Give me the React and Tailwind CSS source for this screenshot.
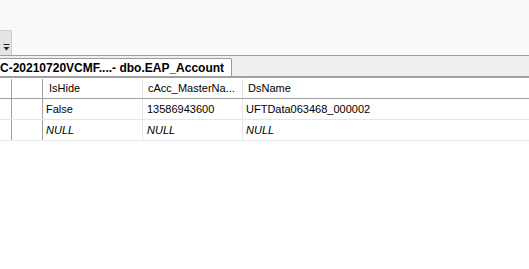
export default function App() {
  const font = { fontFamily: '"Liberation Sans", Arial, sans-serif' };
  return (
    <div className="w-[529px] h-[269px] bg-white overflow-hidden" style={font}>
      <div className="h-[55px] bg-[#f9f9f9] flex items-end">
        <div className="w-[12px] h-[25px] bg-[#e4e4e4] border-r border-t border-[#cfcfcf] rounded-tr-[2px] flex items-end justify-center pb-[4px]">
          <svg width="7" height="7" viewBox="0 0 7 7" className="ml-[1px]">
            <rect x="0.5" y="0" width="6" height="1" fill="#222" />
            <path d="M0.5 3 L6.5 3 L3.5 6.5 Z" fill="#222" />
          </svg>
        </div>
      </div>
      <div className="h-[1px] bg-[#a0a0a0]" />
      <div className="h-[20px] bg-[#efefef] flex items-end">
        <div className="w-[232px] h-[18px] bg-white border-t border-r border-[#9a9a9a] rounded-tr-[2px] flex items-center overflow-hidden">
          <span className="text-[12px] font-bold text-black whitespace-nowrap leading-none pt-[1px]">
            C-20210720VCMF....- dbo.EAP_Account
          </span>
        </div>
      </div>
      <div className="h-[2px] bg-[#a0a0a0]" />
      <div className="h-[1px] bg-white" />
      <div className="text-[11px] text-black leading-none">
        <div className="flex h-[20px] border-b border-[#a0a0a0]">
          <div className="w-[12px] border-r border-[#a0a0a0]" />
          <div className="w-[31px] border-r border-[#a0a0a0]" />
          <div className="w-[100px] border-r border-[#e3e3e3] flex items-center pl-[6px]">IsHide</div>
          <div className="w-[100px] border-r border-[#e3e3e3] flex items-center pl-[5px] whitespace-nowrap">cAcc_MasterNa...</div>
          <div className="flex-1 flex items-center pl-[5px]">DsName</div>
        </div>
        <div className="flex h-[21px] border-b border-[#e6e6e6]">
          <div className="w-[12px] border-r border-[#a0a0a0]" />
          <div className="w-[31px] border-r border-[#a0a0a0]" />
          <div className="w-[100px] border-r border-[#e6e6e6] flex items-center pl-[3px]">False</div>
          <div className="w-[100px] border-r border-[#e6e6e6] flex items-center pl-[4px]">13586943600</div>
          <div className="flex-1 flex items-center pl-[3px]">UFTData063468_000002</div>
        </div>
        <div className="flex h-[21px] border-b border-[#e6e6e6] italic">
          <div className="w-[12px] border-r border-[#a0a0a0]" />
          <div className="w-[31px] border-r border-[#a0a0a0]" />
          <div className="w-[100px] border-r border-[#e6e6e6] flex items-center pl-[3px]">NULL</div>
          <div className="w-[100px] border-r border-[#e6e6e6] flex items-center pl-[4px]">NULL</div>
          <div className="flex-1 flex items-center pl-[3px]">NULL</div>
        </div>
      </div>
    </div>
  );
}
